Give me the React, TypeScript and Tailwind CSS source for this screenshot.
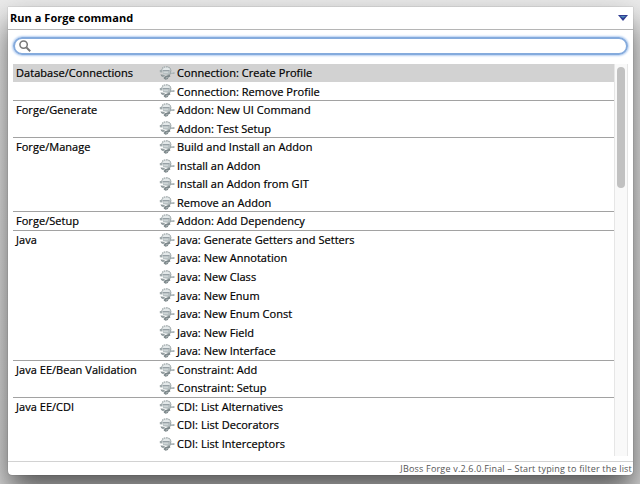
import React from "react";

type Group = { name: string; commands: string[] };

const groups: Group[] = [
  { name: "Database/Connections", commands: ["Connection: Create Profile", "Connection: Remove Profile"] },
  { name: "Forge/Generate", commands: ["Addon: New UI Command", "Addon: Test Setup"] },
  { name: "Forge/Manage", commands: ["Build and Install an Addon", "Install an Addon", "Install an Addon from GIT", "Remove an Addon"] },
  { name: "Forge/Setup", commands: ["Addon: Add Dependency"] },
  { name: "Java", commands: ["Java: Generate Getters and Setters", "Java: New Annotation", "Java: New Class", "Java: New Enum", "Java: New Enum Const", "Java: New Field", "Java: New Interface"] },
  { name: "Java EE/Bean Validation", commands: ["Constraint: Add", "Constraint: Setup"] },
  { name: "Java EE/CDI", commands: ["CDI: List Alternatives", "CDI: List Decorators", "CDI: List Interceptors"] },
];

function ForgeIcon() {
  return (
    <svg className="h-[16px] w-[16px] shrink-0" viewBox="0 0 16 16">
      <path d="M2.8 6C2.8 3 4.6 1.8 7.2 1.8S11.8 3 11.8 6" fill="#e3e8e9" stroke="#a0a9ab" strokeWidth="1.3" strokeDasharray="1.6 .6" />
      <path d="M.8 5h2.4v2.6L.8 7.2zM10.6 5.4h1.6v1.6H15.4v2h-3.2l-2 1.2-2.4.2z" fill="#a0aaac" />
      <path d="M3 5.4h8v3l-3 1.4-3.8-.6z" fill="#b8c1c3" />
      <path d="M4 5.6h6.4" stroke="#828d92" strokeWidth=".8" />
      <path d="M4.6 7.2h4.4M12 7.8h2.6" stroke="#e6ecec" strokeWidth=".7" />
      <path d="M1.4 9.6l2.8.2 2.4 1.2 4.2-1.2.6 1.8-1.8.6-.8 1.8-2.2.8-2-1.2.8-1.2-2.6-.8z" fill="#7b8689" />
      <path d="M3.4 10.8l2.8 .8M6.8 13.2l1.8-.8" stroke="#d5dcdd" strokeWidth=".7" />
    </svg>
  );
}

export default function App() {
  return (
    <div className="flex h-[484px] w-[640px] overflow-hidden bg-linear-to-b from-[#ebebeb] to-[#d8d8d8] pl-[8px] pt-[7px] font-['Open_Sans','Noto_Sans',sans-serif] text-[11px] font-medium text-black">
      <main className="flex h-[468px] w-[625px] flex-col overflow-hidden rounded-b-[4px] bg-white shadow-[0_0_1px_rgba(0,0,0,0.6),0_16px_30px_rgba(0,0,0,0.6)]">
        <header className="flex h-[23px] shrink-0 items-center justify-between border-b border-[#b5b5b5] pl-[2px] pr-[5px] text-[11px] font-bold tracking-[0.04px]">
          <h1>Run a Forge command</h1>
          <svg className="h-[6px] w-[10px]" viewBox="0 0 10 6"><path d="M0 0h10L5 6z" fill="#303c91" /><path d="M2 1h6L5 3z" fill="#4d8db9" /></svg>
        </header>
        <div className="ml-[5px] mt-[7px] flex h-[18px] w-[615px] shrink-0 items-center rounded-full border-2 border-[#85abdd] pl-[4px] shadow-[0_0_2px_1px_#b5cff2]">
          <svg className="h-[12px] w-[12px]" viewBox="0 0 12 12" fill="none" stroke="#777"><circle cx="4.6" cy="4.6" r="3.7" strokeWidth="1.5" /><path d="M7.4 7.4l3.8 3.8" strokeWidth="2" /></svg>
        </div>
        <section className="ml-[5px] mt-[9px] flex h-[392px] shrink-0">
          <div className="w-[601px]">
            {groups.map((group, g) => (
              <div key={group.name}>
                {group.commands.map((command, c) => {
                  const last = c === group.commands.length - 1 && g < groups.length - 1;
                  const selected = g === 0 && c === 0;
                  return (
                    <div
                      key={command}
                      className={
                        "flex h-[18.55px] items-center border-b tracking-[0.04px] [-webkit-text-stroke:0.2px_black] " +
                        (last ? "border-[#a2a2a2] " : "border-transparent ") +
                        (selected ? "bg-[#d2d2d2] bg-clip-padding" : "")
                      }
                    >
                      <span className="w-[146px] pl-[3px] pt-[1px]">{c === 0 ? group.name : ""}</span>
                      <ForgeIcon />
                      <span className="pl-[2px] pt-[1px]">{command}</span>
                    </div>
                  );
                })}
              </div>
            ))}
          </div>
          <div className="w-[14px] border-x border-[#e6e6e6] bg-[#f9f9f9] px-[2px] pt-[3px]"><div className="h-[121px] w-[8px] rounded-full bg-[#c1c1c1]" /></div>
        </section>
        <footer className="mt-[5px] flex h-[14px] shrink-0 items-start justify-end border-t border-[#d2d2d2] pr-[1px] pt-[1px] text-[9px] leading-[12px] tracking-[0.19px] text-[#555]">JBoss Forge v.2.6.0.Final – Start typing to filter the list</footer>
      </main>
    </div>
  );
}
